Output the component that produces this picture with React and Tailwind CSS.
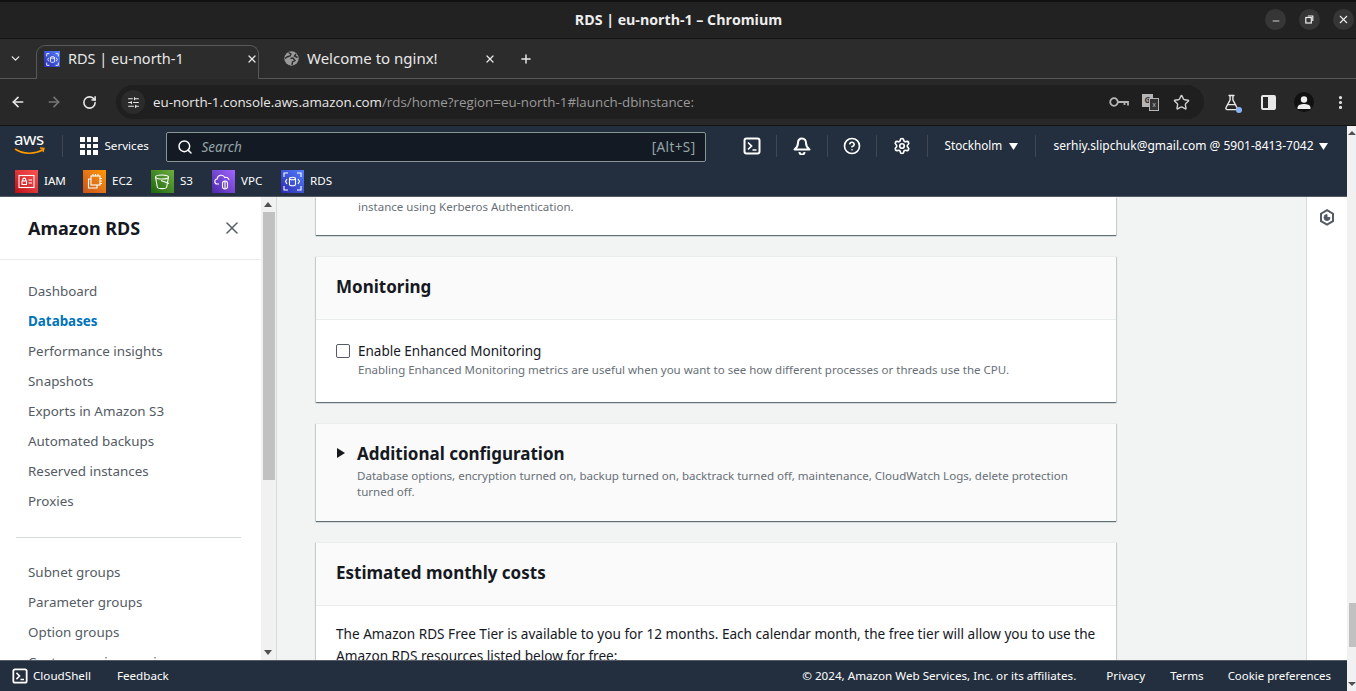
import React from "react";
import { ChevronDown, X, Plus, ArrowLeft, ArrowRight, RotateCw, Star, FlaskConical, Minus, Search, CircleHelp, Settings, SlidersHorizontal, EllipsisVertical } from "lucide-react";

const Tile = ({ bg, children }) => (
  <div className={`w-[23px] h-[23px] flex items-center justify-center shrink-0 ${bg}`}>
    <svg width="19" height="19" viewBox="0 0 19 19" fill="none" stroke="#fff" strokeWidth="1.1">{children}</svg>
  </div>
);

const rdsGlyph = (
  <>
    <path d="M1 5V1h4M14 1h4v4M18 14v4h-4M5 18H1v-4" />
    <ellipse cx="9.5" cy="6.5" rx="3" ry="1.2" />
    <path d="M6.500 6.500v6c0 .7 1.300 1.200 3 1.200s3-.5 3-1.200v-6" />
    <path d="M4 7L2.500 9.500 4 12M15 7l1.500 2.500L15 12" />
  </>
);

const shortcuts = [
  ["IAM", "bg-gradient-to-tr from-[#bd0816] to-[#ff5252]", <><rect x="2" y="3.500" width="15" height="12" /><rect x="5" y="9" width="4.500" height="3.500" /><path d="M5.800 9V7.600a1.400 1.400 0 0 1 2.900 0V9M11.500 8h3.500M11.500 11h3.500" /></>, "w-[68px]"],
  ["EC2", "bg-gradient-to-tr from-[#c8511b] to-[#ff9900]", <><rect x="6" y="4" width="9" height="9" /><path d="M6 7H3.500v9H12v-3M8 4V2M10.500 4V2M13 4V2M15 6.500h2M15 9h2M15 11.500h2" /></>, "w-[68px]"],
  ["S3", "bg-gradient-to-tr from-[#1b660f] to-[#6cae3e]", <><ellipse cx="9" cy="5" rx="6.500" ry="2" /><path d="M2.500 5l1.800 10c.2.9 2.200 1.600 4.700 1.600s4.500-.7 4.700-1.600L15.500 5M8 8.500l8 3" /></>, "w-[61px]"],
  ["VPC", "bg-gradient-to-tr from-[#4d27a8] to-[#a166ff]", <><path d="M5 12H3.500a2.500 2.500 0 0 1-.3-5 4 4 0 0 1 7.600-1.500 3 3 0 0 1 4.200 2.500" /><rect x="8.500" y="9" width="5" height="8" rx="2.500" /><path d="M11 9v8" /></>, "w-[69px]"],
  ["RDS", "bg-gradient-to-tr from-[#2e27ad] to-[#527fff]", rdsGlyph, ""],
];

const nav1 = ["Dashboard", "Databases", "Performance insights", "Snapshots", "Exports in Amazon S3", "Automated backups", "Reserved instances", "Proxies"];
const nav2 = ["Subnet groups", "Parameter groups", "Option groups", "Custom engine versions"];

const cardShadow = "shadow-[0_1px_1px_0_rgba(0,28,36,0.5),1px_1px_1px_0_rgba(0,28,36,0.1),-1px_1px_1px_0_rgba(0,28,36,0.1)]";

const HeadDivider = () => <div className="w-px h-[22px] bg-[#414750]" />;

const TermIcon = ({ size = 18 }) => (
  <svg width={size} height={size} viewBox="0 0 18 18" fill="none" stroke="#fff" strokeWidth="2">
    <rect x="1.500" y="1.500" width="15" height="15" rx="2" />
    <path d="M5 5.500L8.500 9 5 12.500M9.500 13h4" strokeWidth="1.700" />
  </svg>
);

const Caret = () => (
  <svg width="9" height="7" viewBox="0 0 9 7" fill="#fff"><path d="M0 0h9L4.500 7z" /></svg>
);

export default function App() {
  return (
    <div className="relative h-[691px] w-[1356px] overflow-hidden flex flex-col bg-[#f2f3f3] font-['Noto_Sans',sans-serif]">
      {/* Window title bar */}
      <div className="relative h-[39px] shrink-0 bg-[#222222] border-t-2 border-[#111111] border-b border-b-[#141414] flex items-center justify-center">
        <span className="text-[14.200px] font-bold text-[#eeeeee] font-['Open_Sans',sans-serif] ml-[1px]">RDS | eu-north-1 – Chromium</span>
        <div className="absolute right-[2px] top-[7px] flex gap-[13px]">
          <div className="w-[21px] h-[21px] rounded-full bg-[#363636] flex items-center justify-center"><Minus size={10} color="#eee" strokeWidth={2} className="mt-[3px]" /></div>
          <div className="w-[21px] h-[21px] rounded-full bg-[#363636] flex items-center justify-center">
            <svg width="9" height="9" viewBox="0 0 9 9" fill="none" stroke="#eee" strokeWidth="1.200"><rect x="0.800" y="2.500" width="5.500" height="5.500" /><path d="M2.800 1h5v5" /></svg>
          </div>
          <div className="w-[21px] h-[21px] rounded-full bg-[#363636] flex items-center justify-center"><X size={13} color="#eee" strokeWidth={2} /></div>
        </div>
      </div>

      {/* Tab strip */}
      <div className="relative h-[40px] shrink-0 bg-[#2c2c2c] border-b border-[#585858] flex items-end">
        <div className="w-[36px] h-[34px] pb-[7px] flex items-center justify-center -mb-[1px] -ml-[3px] mr-[3px]"><ChevronDown size={13} color="#e8e8e8" strokeWidth={2.500} /></div>
        <div className="relative z-10 w-[223px] h-[34px] pb-[7px] -mb-[1px] bg-[#2c2c2c] border border-b-0 border-[#585858] rounded-t-[9px] flex items-center pl-[7px] text-[#e8e8e8]">
          <div className="w-[16px] h-[16px] bg-gradient-to-tr from-[#2e27ad] to-[#527fff] flex items-center justify-center shrink-0">
            <svg width="13" height="13" viewBox="0 0 19 19" fill="none" stroke="#fff" strokeWidth="1.300">{rdsGlyph}</svg>
          </div>
          <span className="ml-[8px] text-[14.500px] flex-1">RDS | eu-north-1</span>
          <X size={12} color="#e8e8e8" strokeWidth={2.500} />
        </div>
        <div className="w-[238px] h-[34px] pb-[7px] -mb-[1px] flex items-center pl-[25px] text-[#e8e8e8]">
          <svg width="15" height="15" viewBox="0 0 15 15" className="shrink-0">
            <circle cx="7.500" cy="7.500" r="7.200" fill="#9a9a9a" />
            <path d="M4.500 1.500l2.500 1.500-1 2-3 1-2 1.500M8 14l.5-3 2.500-1.500-2-2.500-2.500.5M12 3l-1.500 2 3 1.500" fill="none" stroke="#2c2c2c" strokeWidth="1.400" />
          </svg>
          <span className="ml-[8px] text-[15px] flex-1 whitespace-nowrap">Welcome to nginx!</span>
          <X size={12} color="#e8e8e8" strokeWidth={2.500} className="mr-[1px]" />
        </div>
        <div className="ml-[22px] h-[34px] pb-[7px] -mb-[1px] flex items-center"><Plus size={14} color="#e8e8e8" strokeWidth={2.500} /></div>
      </div>

      {/* Toolbar */}
      <div className="h-[47px] shrink-0 bg-[#282828] border-b border-[#141414] flex items-center">
        <ArrowLeft size={16} color="#e8e8e8" strokeWidth={2.500} className="ml-[10px]" />
        <ArrowRight size={16} color="#777777" strokeWidth={2.500} className="ml-[20px]" />
        <RotateCw size={15} color="#e8e8e8" strokeWidth={2.500} className="ml-[20px]" />
        <div className="ml-[19px] w-[1088px] h-[34px] rounded-full bg-[#1f1f1f] flex items-center">
          <div className="ml-[5px] w-[24px] h-[24px] rounded-full bg-[#2b2b2b] flex items-center justify-center"><SlidersHorizontal size={13} color="#e8e8e8" strokeWidth={2} /></div>
          <span className="ml-[8px] text-[13.350px] text-[#e8e8e8] font-['Open_Sans',sans-serif] flex-1 whitespace-nowrap">eu-north-1.console.aws.amazon.com<span className="text-[#9a9a9a]">/rds/home?region=eu-north-1#launch-dbinstance:</span></span>
          <svg width="20" height="11" viewBox="0 0 20 11" fill="none" stroke="#b5b5b5" strokeWidth="1.800" className="mr-[13px]">
            <circle cx="5" cy="5" r="3.800" />
            <path d="M9 5h10v3.500M15.500 5v3" />
          </svg>
          <div className="relative w-[17px] h-[17px] mr-[14px]">
            <div className="absolute left-0 top-0 w-[11px] h-[13px] bg-[#b5b5b5] text-[8px] font-bold text-[#333] flex items-center justify-center">G</div>
            <div className="absolute right-0 bottom-0 w-[10px] h-[13px] border border-[#b5b5b5] bg-[#333] flex items-center justify-center text-[7px] leading-none text-[#b5b5b5]">x</div>
          </div>
          <Star size={17} color="#d0d0d0" strokeWidth={2} className="mr-[14px]" />
        </div>
        <div className="relative ml-[19px]">
          <FlaskConical size={17} color="#e8e8e8" strokeWidth={2} />
          <div className="absolute -right-[2px] -bottom-[2px] w-[6px] h-[6px] rounded-full bg-[#8ab4f8]" />
        </div>
        <div className="ml-[21px] w-[15px] h-[15px] rounded-[2px] border-2 border-[#e8e8e8] flex justify-end"><div className="w-[6px] bg-[#e8e8e8]" /></div>
        <div className="ml-[18px] w-[20px] h-[20px] rounded-full bg-[#111111] flex items-center justify-center">
          <svg width="14" height="13" viewBox="0 0 14 13" fill="#eee"><circle cx="7" cy="3.500" r="3.200" /><path d="M.5 13v-1.500C.5 9 4 8 7 8s6.500 1 6.500 3.500V13z" /></svg>
        </div>
        <EllipsisVertical size={17} color="#e8e8e8" strokeWidth={2.500} className="ml-[18px]" />
      </div>

      {/* Page + page scrollbar */}
      <div className="flex-1 min-h-0 flex">
        <div className="w-[1347px] flex flex-col min-h-0">
          {/* AWS header */}
          <div className="h-[71px] shrink-0 bg-[#232f3e] border-b border-[#545b64] text-white">
            <div className="h-[40px] flex items-center pl-[14px]">
              <div className="relative w-[32px] h-[24px] mt-[-2px]">
                <span className="absolute left-0 -top-[6px] text-[17px] leading-[24px] tracking-[-0.5px]">aws</span>
                <svg className="absolute left-0 top-[14px]" width="32" height="9" viewBox="0 0 32 9" fill="none"><path d="M1 2c8 5.500 20 5.500 28 .5" stroke="#ff9900" strokeWidth="1.600" /><path d="M26 1l4 .3-1 3.700" stroke="#ff9900" strokeWidth="1.300" /></svg>
              </div>
              <div className="ml-[16px] w-px h-[22px] bg-[#414750]" />
              <div className="ml-[17px] grid grid-cols-3 gap-[2px]">
                {Array.from({ length: 9 }).map((_, i) => <div key={i} className="w-[4.500px] h-[4.500px] bg-white" />)}
              </div>
              <span className="ml-[7px] w-[61px] text-[11.600px]">Services</span>
              <div className="w-[540px] h-[30px] bg-[#141a24] border border-[#879596] rounded-[2px] flex items-center pl-[10px] pr-[9px] mt-[1px]">
                <Search size={16} color="#fff" strokeWidth={2.200} />
                <span className="ml-[9px] mt-[1px] text-[13.500px] italic text-[#95a5a6] flex-1">Search</span>
                <span className="mt-[1px] text-[13.500px] tracking-[0.4px] text-[#95a5a6]">[Alt+S]</span>
              </div>
              <div className="ml-[37px]"><TermIcon /></div>
              <div className="ml-[15px]"><HeadDivider /></div>
              <svg width="18" height="18" viewBox="0 0 18 18" fill="none" stroke="#fff" strokeWidth="2" className="ml-[16px]">
                <path d="M9 1.500c-2.800 0-4 2.200-4 4.500 0 3-1.500 5-3.500 6.500h15C14.500 11 13 9 13 6c0-2.300-1.200-4.500-4-4.500z" strokeLinejoin="round" />
                <path d="M6.500 15a2.500 2.500 0 0 0 5 0" />
              </svg>
              <div className="ml-[16px]"><HeadDivider /></div>
              <CircleHelp size={18} color="#fff" strokeWidth={2.200} className="ml-[15px]" />
              <div className="ml-[15px]"><HeadDivider /></div>
              <Settings size={18} color="#fff" strokeWidth={2.200} className="ml-[16px]" />
              <div className="ml-[16px]"><HeadDivider /></div>
              <span className="ml-[17px] w-[58px] text-[11.700px] whitespace-nowrap">Stockholm</span>
              <div className="ml-[6px]"><Caret /></div>
              <div className="ml-[17px]"><HeadDivider /></div>
              <span className="ml-[18px] w-[259px] text-[12px] whitespace-nowrap">serhiy.slipchuk@gmail.com @ 5901-8413-7042</span>
              <div className="ml-[6px]"><Caret /></div>
            </div>
            <div className="h-[30px] flex items-center pl-[15px]">
              {shortcuts.map(([name, bg, glyph, w]) => (
                <div key={name} className={`flex items-center gap-[6px] ${w}`}>
                  <Tile bg={bg}>{glyph}</Tile>
                  <span className="text-[11.600px]">{name}</span>
                </div>
              ))}
            </div>
          </div>

          {/* Body */}
          <div className="flex-1 min-h-0 flex overflow-hidden">
            {/* Side nav */}
            <aside className="w-[261px] shrink-0 bg-white overflow-hidden">
              <div className="h-[63px] border-b border-[#eaeded] flex items-center justify-between pl-[28px] pr-[19px]">
                <span className="text-[18px] font-bold text-[#16191f]">Amazon RDS</span>
                <X size={20} color="#545b64" strokeWidth={1.800} />
              </div>
              <div className="pt-[16px] pl-[28px]">
                {nav1.map(n => (
                  <div key={n} className={`h-[30px] flex items-center text-[13.400px] ${n === "Databases" ? "font-bold text-[#0073bb]" : "text-[#545b64]"}`}>{n}</div>
                ))}
              </div>
              <div className="mt-[21px] ml-[16px] w-[225px] h-px bg-[#d5dbdb]" />
              <div className="pt-[19px] pl-[28px]">
                {nav2.map(n => (
                  <div key={n} className="h-[30px] flex items-center text-[13.400px] text-[#545b64]">{n}</div>
                ))}
              </div>
            </aside>
            {/* Side scrollbar */}
            <div className="relative w-[15px] shrink-0 bg-[#f1f1f1]">
              <div className="absolute left-[2px] top-[15px] w-[12px] h-[268px] bg-[#c1c1c1]" />
              <div className="absolute left-[3px] top-[5px] w-0 h-0 border-x-[4px] border-x-transparent border-b-[5px] border-b-[#505050]" />
              <div className="absolute left-[3px] bottom-[5px] w-0 h-0 border-x-[4px] border-x-transparent border-t-[5px] border-t-[#505050]" />
            </div>
            <div className="w-px shrink-0 bg-[#d5dbdb]" />

            {/* Main */}
            <main className="flex-1 min-w-0 overflow-hidden pl-[39px]">
              <div className="w-[800px] flex flex-col">
                <section className={`bg-white ${cardShadow} h-[38px] pl-[42px] text-[11.500px] text-[#687078] leading-[20px]`}>
                  instance using Kerberos Authentication.
                </section>
                <section className={`mt-[21px] bg-white border-t border-[#eaeded] ${cardShadow}`}>
                  <div className="h-[63px] bg-[#fafafa] border-b border-[#eaeded] flex items-center pl-[20px] pb-[2px]">
                    <h2 className="text-[17px] font-bold text-[#16191f]">Monitoring</h2>
                  </div>
                  <div className="h-[82px] pl-[20px] pt-[21px] flex">
                    <div className="w-[14px] h-[14px] mt-[3px] border border-[#545b64] rounded-[2px] bg-white shrink-0" />
                    <div className="ml-[8px]">
                      <div className="text-[13.500px] leading-[20px] text-[#16191f]">Enable Enhanced Monitoring</div>
                      <div className="text-[11.500px] tracking-[0.01px] leading-[16px] text-[#687078] mt-[1px]">Enabling Enhanced Monitoring metrics are useful when you want to see how different processes or threads use the CPU.</div>
                    </div>
                  </div>
                </section>
                <section className={`mt-[21px] bg-[#fafafa] border-t border-[#eaeded] ${cardShadow} h-[98px] pl-[20px] pt-[18px] flex`}>
                  <svg width="10" height="10" viewBox="0 0 10 10" className="mt-[6px] shrink-0"><path d="M1 0l8 5-8 5z" fill="#16191f" /></svg>
                  <div className="ml-[11px] w-[740px]">
                    <h2 className="text-[17px] leading-[24px] font-bold text-[#16191f]">Additional configuration</h2>
                    <p className="mt-[2px] text-[11.550px] leading-[16px] text-[#687078]">Database options, encryption turned on, backup turned on, backtrack turned off, maintenance, CloudWatch Logs, delete protection turned off.</p>
                  </div>
                </section>
                <section className={`mt-[21px] bg-white border-t border-[#eaeded] ${cardShadow}`}>
                  <div className="h-[63px] bg-[#fafafa] border-b border-[#eaeded] flex items-center pl-[20px] pb-[2px]">
                    <h2 className="text-[17px] font-bold text-[#16191f]">Estimated monthly costs</h2>
                  </div>
                  <p className="pt-[17px] pl-[20px] pr-[18px] text-[13.600px] leading-[22px] text-[#16191f]">The Amazon RDS Free Tier is available to you for 12 months. Each calendar month, the free tier will allow you to use the Amazon RDS resources listed below for free:</p>
                </section>
              </div>
            </main>

            {/* Right rail */}
            <div className="w-[41px] shrink-0 bg-white border-l border-[#d5dbdb] flex justify-center pt-[12px]">
              <svg width="16" height="17" viewBox="0 0 16 17" fill="none" stroke="#545b64" strokeWidth="2"><path d="M8 1.200l6 3.500v7.400l-6 3.600-6-3.600V4.700z" /><path d="M8 5.500a3 3 0 1 0 3 3H8z" fill="#545b64" strokeWidth="1" /></svg>
            </div>
          </div>

          {/* Footer */}
          <div className="h-[31px] shrink-0 bg-[#232f3e] border-t border-[#545b64] flex items-center text-white text-[11.650px]">
            <div className="ml-[12px]"><TermIcon size={16} /></div>
            <span className="ml-[5px]">CloudShell</span>
            <span className="ml-[26px]">Feedback</span>
            <span className="ml-auto">© 2024, Amazon Web Services, Inc. or its affiliates.</span>
            <span className="ml-[30px]">Privacy</span>
            <span className="ml-[25px]">Terms</span>
            <span className="ml-[24px] mr-[16px] text-[11.450px]">Cookie preferences</span>
          </div>
        </div>

        {/* Page scrollbar */}
        <div className="relative w-[9px] shrink-0 bg-[#f1f1f1]">
          <div className="absolute left-[2px] top-[477px] w-[7px] h-[44px] bg-[#c1c1c1]" />
          <div className="absolute left-[1px] top-[5px] w-0 h-0 border-x-[4px] border-x-transparent border-b-[4px] border-b-[#505050]" />
          <div className="absolute left-[1px] bottom-[5px] w-0 h-0 border-x-[4px] border-x-transparent border-t-[4px] border-t-[#505050]" />
        </div>
      </div>
    </div>
  );
}
